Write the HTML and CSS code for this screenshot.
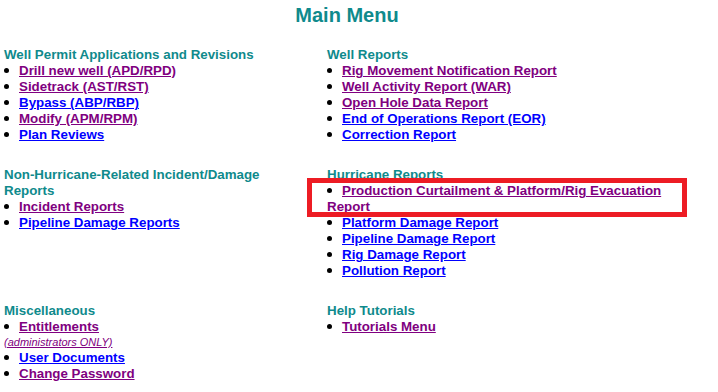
FILE: index.html
```html
<!DOCTYPE html>
<html lang="en">
<head>
  <meta charset="UTF-8" />
  <title>Main Menu</title>
  <link rel="stylesheet" href="styles.css">
</head>
<body>
  <h1 class="title">Main Menu</h1>

  <div class="menu-grid">
    <div class="section">
      <div class="section-head">Well Permit Applications and Revisions</div>
      <ul>
        <li><a class="visited" href="#">Drill new well (APD/RPD)</a></li>
        <li><a class="visited" href="#">Sidetrack (AST/RST)</a></li>
        <li><a href="#">Bypass (ABP/RBP)</a></li>
        <li><a class="visited" href="#">Modify (APM/RPM)</a></li>
        <li><a href="#">Plan Reviews</a></li>
      </ul>
    </div>

    <div class="section">
      <div class="section-head">Well Reports</div>
      <ul>
        <li><a class="visited" href="#">Rig Movement Notification Report</a></li>
        <li><a class="visited" href="#">Well Activity Report (WAR)</a></li>
        <li><a class="visited" href="#">Open Hole Data Report</a></li>
        <li><a href="#">End of Operations Report (EOR)</a></li>
        <li><a href="#">Correction Report</a></li>
      </ul>
    </div>

    <div class="section">
      <div class="section-head">Non-Hurricane-Related Incident/Damage Reports</div>
      <ul>
        <li><a class="visited" href="#">Incident Reports</a></li>
        <li><a href="#">Pipeline Damage Reports</a></li>
      </ul>
    </div>

    <div class="section hurricane">
      <div class="section-head">Hurricane Reports</div>
      <ul>
        <li><a class="visited" href="#">Production Curtailment &amp; Platform/Rig Evacuation Report</a></li>
        <li><a href="#">Platform Damage Report</a></li>
        <li><a href="#">Pipeline Damage Report</a></li>
        <li><a href="#">Rig Damage Report</a></li>
        <li><a href="#">Pollution Report</a></li>
      </ul>
      <div class="highlight-box"></div>
    </div>

    <div class="section">
      <div class="section-head">Miscellaneous</div>
      <ul>
        <li><a class="visited" href="#">Entitlements</a><a class="visited note" href="#">(administrators ONLY)</a></li>
        <li><a href="#">User Documents</a></li>
        <li><a class="visited" href="#">Change Password</a></li>
      </ul>
    </div>

    <div class="section">
      <div class="section-head">Help Tutorials</div>
      <ul>
        <li><a class="visited" href="#">Tutorials Menu</a></li>
      </ul>
    </div>
  </div>
</body>
</html>
```

FILE: styles.css
```css
body {
  font-family: "Liberation Sans", Arial, sans-serif;
  font-size: 13.33px;
  font-weight: bold;
  line-height: 16px;
  margin: 0;
  padding: 4px 0 0 4px;
  background: #fff;
  color: #000;
}

.title {
  width: 686px;
  margin: 0 0 20px 0;
  font-size: 20px;
  line-height: 23px;
  text-align: center;
  color: #0f8a8c;
}

.menu-grid {
  display: grid;
  grid-template-columns: 290px 370px;
  column-gap: 33px;
  row-gap: 24px;
  align-items: start;
}

.section-head {
  color: #0f8a8c;
}

ul {
  list-style: none;
  margin: 0;
  padding: 0;
}

li::before {
  content: "";
  display: inline-block;
  width: 5px;
  height: 5px;
  border-radius: 50%;
  background: #000;
  margin: 0 10px 0 0;
  vertical-align: 2px;
}

a {
  color: #0000ff;
  text-decoration: underline;
}

a.visited {
  color: #800080;
}

a.note {
  display: block;
  width: max-content;
  font-size: 11px;
  line-height: 15px;
  font-style: italic;
  font-weight: normal;
}

.hurricane {
  position: relative;
}

.highlight-box {
  position: absolute;
  left: -20px;
  top: 11px;
  width: 370px;
  height: 29px;
  border: 5px solid #ed1c24;
}
```
